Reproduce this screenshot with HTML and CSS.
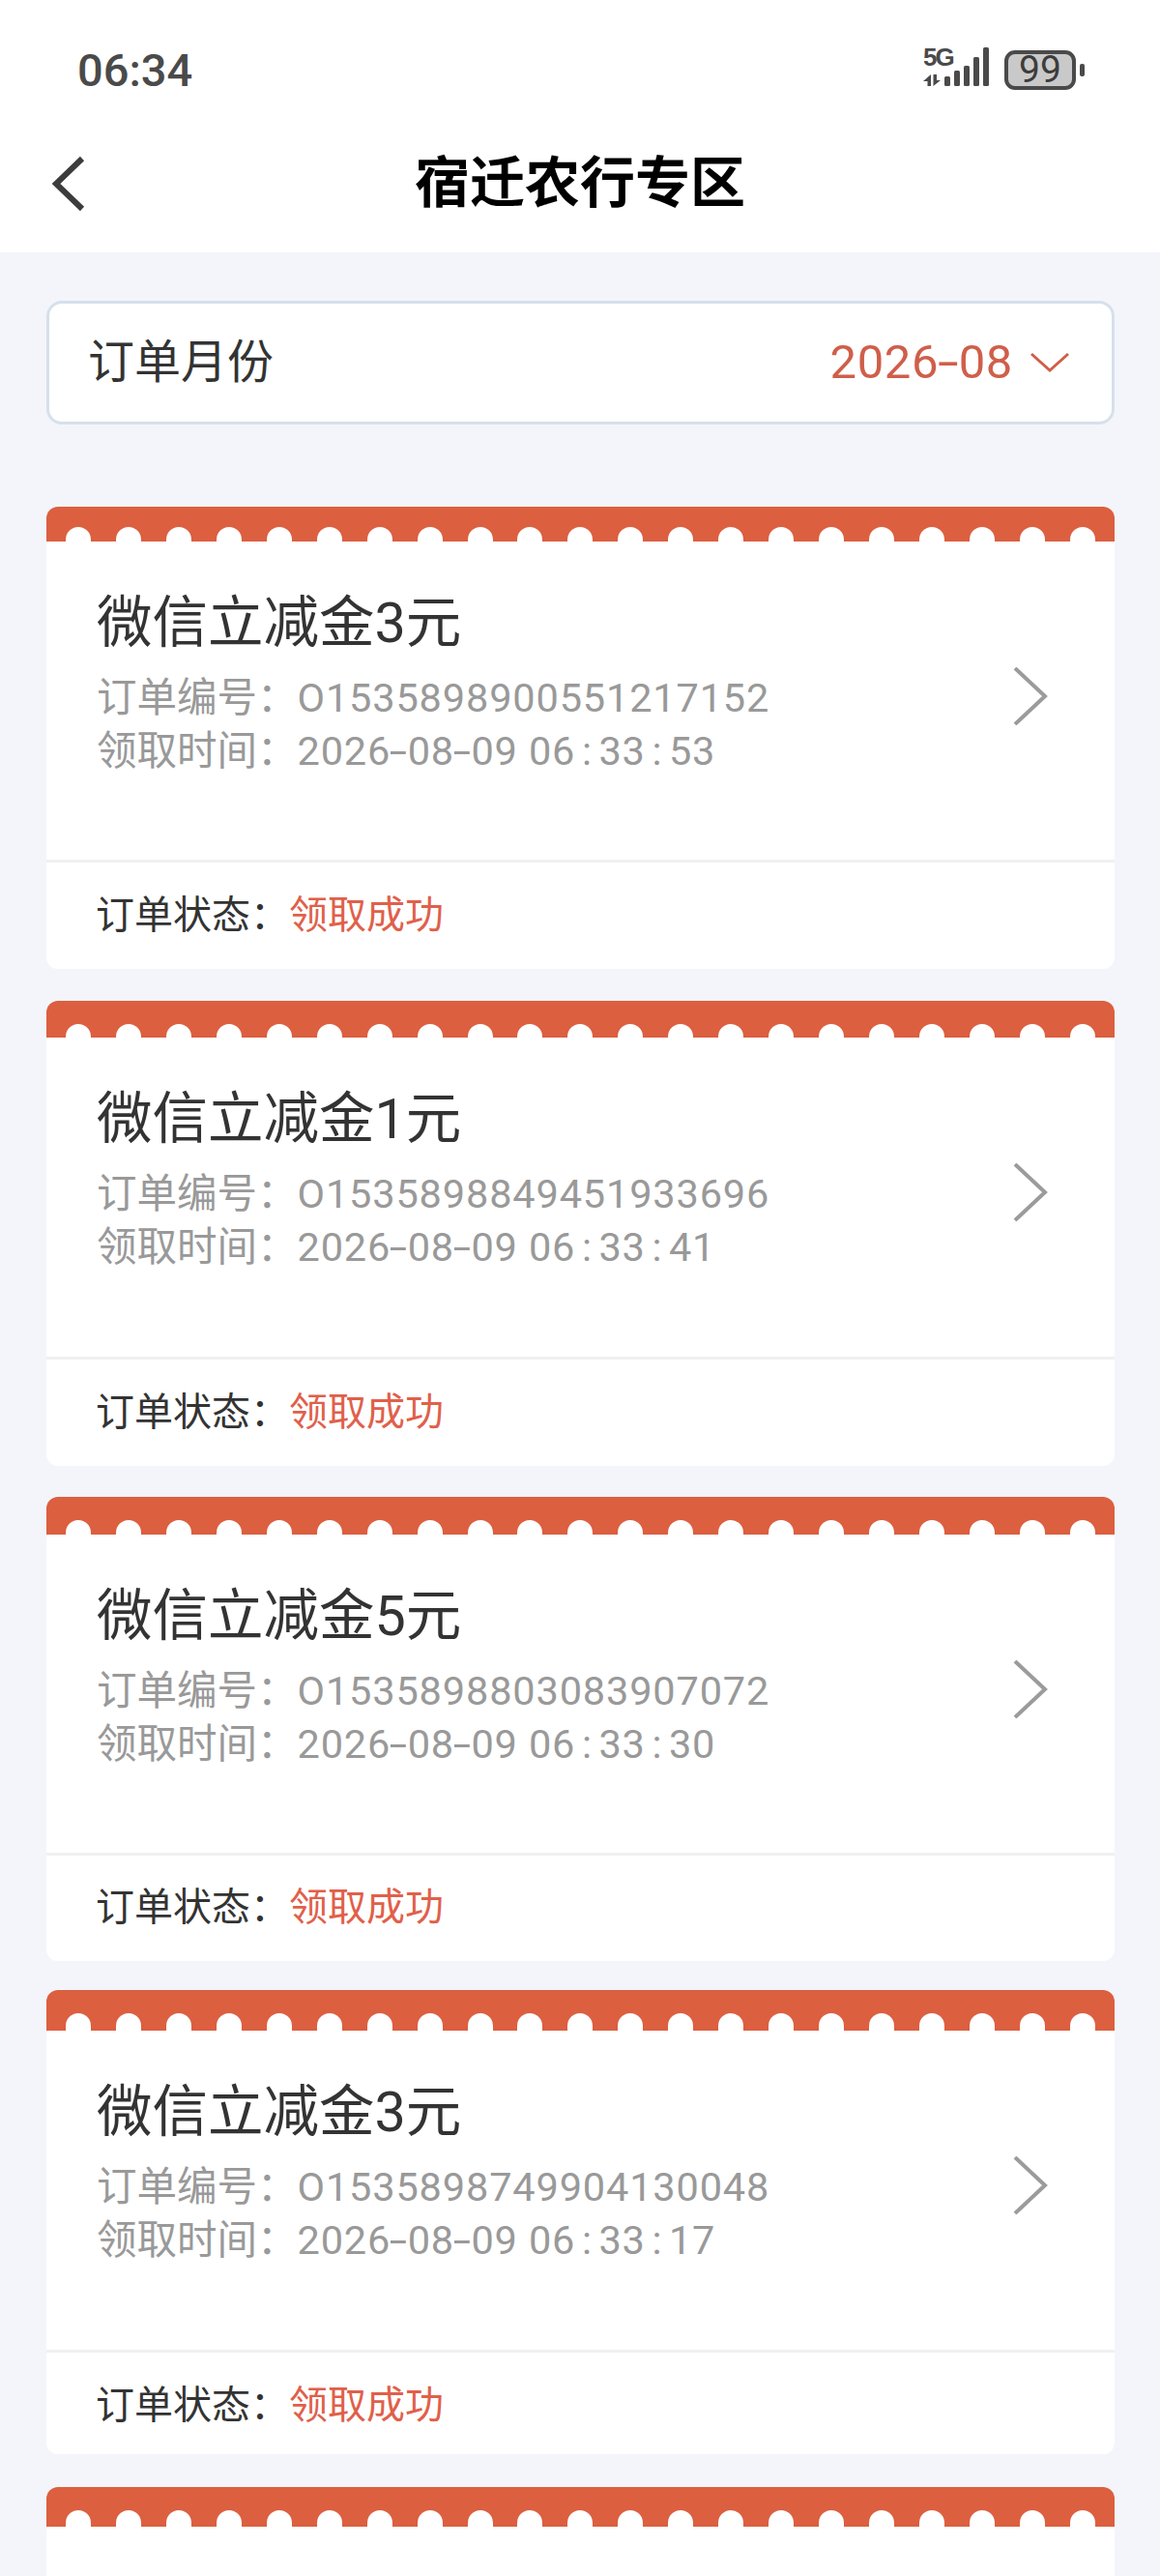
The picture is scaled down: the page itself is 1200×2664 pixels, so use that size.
FILE: index.html
```html
<!DOCTYPE html>
<html lang="zh-CN">
<head>
<meta charset="utf-8">
<title>宿迁农行专区</title>
<link rel="stylesheet" href="styles.css">
</head>
<body>
<div class="page">
  <header class="top">
    <div class="status">
      <span class="time">06:34</span>
      <div class="indicators">
        <svg class="net" width="72" height="52" viewBox="0 -8 72 52">
          <text x="0" y="19" class="net-label">5G</text>
          <path class="net-arrow" d="M8 28v12H4.500v-5H0zM10.500 28v12l7.500-6h-4v-6z"/>
          <rect x="22" y="30" width="6" height="10" rx="1.500"/>
          <rect x="32" y="24" width="6" height="16" rx="1.500"/>
          <rect x="42" y="19" width="6" height="21" rx="1.500"/>
          <rect x="52" y="10" width="6" height="30" rx="1.500"/>
          <rect x="62" y="0" width="6" height="40" rx="1.500"/>
        </svg>
        <div class="battery"><span>99</span></div>
        <i class="battery-nub"></i>
      </div>
    </div>
    <nav class="nav">
      <svg class="back" width="40" height="58" viewBox="0 0 40 58"><path d="M34 3 7 29l27 26"/></svg>
      <h1>宿迁农行专区</h1>
    </nav>
  </header>

  <main class="content">
    <div class="month">
      <span class="month-label">订单月份</span>
      <span class="month-value"><span class="month-text">2026<span class="hy">-</span>08</span>
        <svg width="40" height="22" viewBox="0 0 40 22"><path d="M1 2 20 19 39 2"/></svg>
      </span>
    </div>

    <article class="card card-a">
      <div class="band"><i></i><i></i><i></i><i></i><i></i><i></i><i></i><i></i><i></i><i></i><i></i><i></i><i></i><i></i><i></i><i></i><i></i><i></i><i></i><i></i><i></i></div>
      <div class="body">
        <div class="info">
          <h2>微信立减金3元</h2>
          <p>订单编号：<span class="num">O1535898900551217152</span></p>
          <p>领取时间：<span class="num">2026<span class="hy">-</span>08<span class="hy">-</span>09 06<span class="sep">:</span>33<span class="sep">:</span>53</span></p>
        </div>
        <svg class="go" width="36" height="60" viewBox="0 0 36 60"><path d="M2 1 33 30 2 59"/></svg>
      </div>
      <div class="foot">订单状态：<b>领取成功</b></div>
    </article>

    <article class="card card-b">
      <div class="band"><i></i><i></i><i></i><i></i><i></i><i></i><i></i><i></i><i></i><i></i><i></i><i></i><i></i><i></i><i></i><i></i><i></i><i></i><i></i><i></i><i></i></div>
      <div class="body">
        <div class="info">
          <h2>微信立减金1元</h2>
          <p>订单编号：<span class="num">O1535898849451933696</span></p>
          <p>领取时间：<span class="num">2026<span class="hy">-</span>08<span class="hy">-</span>09 06<span class="sep">:</span>33<span class="sep">:</span>41</span></p>
        </div>
        <svg class="go" width="36" height="60" viewBox="0 0 36 60"><path d="M2 1 33 30 2 59"/></svg>
      </div>
      <div class="foot">订单状态：<b>领取成功</b></div>
    </article>

    <article class="card card-c">
      <div class="band"><i></i><i></i><i></i><i></i><i></i><i></i><i></i><i></i><i></i><i></i><i></i><i></i><i></i><i></i><i></i><i></i><i></i><i></i><i></i><i></i><i></i></div>
      <div class="body">
        <div class="info">
          <h2>微信立减金5元</h2>
          <p>订单编号：<span class="num">O1535898803083907072</span></p>
          <p>领取时间：<span class="num">2026<span class="hy">-</span>08<span class="hy">-</span>09 06<span class="sep">:</span>33<span class="sep">:</span>30</span></p>
        </div>
        <svg class="go" width="36" height="60" viewBox="0 0 36 60"><path d="M2 1 33 30 2 59"/></svg>
      </div>
      <div class="foot">订单状态：<b>领取成功</b></div>
    </article>

    <article class="card card-d">
      <div class="band"><i></i><i></i><i></i><i></i><i></i><i></i><i></i><i></i><i></i><i></i><i></i><i></i><i></i><i></i><i></i><i></i><i></i><i></i><i></i><i></i><i></i></div>
      <div class="body">
        <div class="info">
          <h2>微信立减金3元</h2>
          <p>订单编号：<span class="num">O1535898749904130048</span></p>
          <p>领取时间：<span class="num">2026<span class="hy">-</span>08<span class="hy">-</span>09 06<span class="sep">:</span>33<span class="sep">:</span>17</span></p>
        </div>
        <svg class="go" width="36" height="60" viewBox="0 0 36 60"><path d="M2 1 33 30 2 59"/></svg>
      </div>
      <div class="foot">订单状态：<b>领取成功</b></div>
    </article>

    <article class="card card-e">
      <div class="band"><i></i><i></i><i></i><i></i><i></i><i></i><i></i><i></i><i></i><i></i><i></i><i></i><i></i><i></i><i></i><i></i><i></i><i></i><i></i><i></i><i></i></div>
    </article>
  </main>
</div>
</body>
</html>
```
FILE: styles.css
```css
* { box-sizing: border-box; }

html, body {
  margin: 0;
  padding: 0;
  background: #f4f5fa;
}

body {
  font-family: Roboto, "Noto Sans CJK SC", sans-serif;
  color: #333;
}

.page {
  width: 1200px;
  height: 2664px;
  overflow: hidden;
}

.top {
  background: #fff;
  height: 261px;
}

.status {
  height: 142px;
  padding: 2px 78px 0 80px;
  display: flex;
  align-items: center;
  justify-content: space-between;
}

.time {
  font-size: 47px;
  font-weight: 500;
  color: #4a4a4a;
  line-height: 1;
}

.indicators {
  display: flex;
  align-items: center;
}

.net {
  fill: #4a4a4a;
  margin-right: 12px;
  margin-top: -10px;
}

.net-label {
  font-family: "Liberation Sans", sans-serif;
  font-size: 26px;
  font-weight: 700;
  letter-spacing: -2px;
}

.battery {
  width: 74px;
  height: 41px;
  border: 4px solid #4a4a4a;
  border-radius: 11px;
  background: #c9c9c9;
  display: flex;
  align-items: center;
  justify-content: center;
}

.battery span {
  font-size: 39px;
  line-height: 1;
  color: #3c3c3c;
}

.battery-nub {
  width: 5px;
  height: 13px;
  margin-left: 4px;
  border-radius: 2px;
  background: #4a4a4a;
}

.nav {
  height: 117px;
  position: relative;
  display: flex;
  align-items: center;
  justify-content: center;
}

.nav h1 {
  margin: 0 0 22px;
  font-size: 57px;
  font-weight: 700;
  color: #000;
  line-height: 60px;
}

.back {
  position: absolute;
  left: 51px;
  top: 19px;
  fill: none;
  stroke: #3c3c3c;
  stroke-width: 6;
}

.content {
  padding: 50px 47px 0 48px;
}

.month {
  height: 128px;
  margin-bottom: 84.5px;
  padding: 0 44px 0 40px;
  background: #fff;
  border: 3px solid #d6e0ec;
  border-radius: 16px;
  display: flex;
  align-items: center;
  justify-content: space-between;
}

.month-label {
  font-size: 48px;
  line-height: 60px;
  color: #333;
}

.month-value {
  display: flex;
  align-items: center;
  gap: 18px;
  font-size: 49px;
  line-height: 60px;
  color: #cf5f4a;
}

.month-text { letter-spacing: .6px; }

.month-value svg {
  fill: none;
  stroke: #cf5f4a;
  stroke-width: 3;
}

.hy {
  display: inline-block;
  width: .42em;
  text-align: center;
  transform: scaleX(1.6);
}

.sep {
  margin: 0 .16em;
}

.card {
  background: #fff;
  border-radius: 12px;
  overflow: hidden;
}

.card-a { margin-bottom: 32.5px; }
.card-b { margin-bottom: 32px; }
.card-c { margin-bottom: 30px; }
.card-d { margin-bottom: 34px; }
.card-e { min-height: 120px; }

.band {
  background: #dc5f40;
  padding: 0 20px;
  display: flex;
  align-items: flex-end;
  justify-content: space-between;
}

.band i {
  width: 26px;
  background: #fff;
  border-radius: 13px 13px 0 0;
}

.card-a .band { height: 36.5px; }
.card-b .band { height: 38.5px; }
.card-c .band { height: 39px; }
.card-d .band { height: 42px; }
.card-e .band { height: 41px; }

.card-a .band i { height: 15px; }
.card-b .band i { height: 14px; }
.card-c .band i { height: 15px; }
.card-d .band i { height: 18px; }
.card-e .band i { height: 17px; }

.body {
  height: 329px;
  padding: 50px 69px 0 52px;
  display: flex;
  justify-content: space-between;
  align-items: flex-start;
}

.card-b .body,
.card-d .body { height: 330px; }

.info h2 {
  margin: 0 0 14px;
  font-size: 57.5px;
  font-weight: 400;
  line-height: 70px;
  color: #333;
}

.info p {
  margin: 0;
  font-size: 41.5px;
  line-height: 55px;
  color: #999;
}

.num { letter-spacing: .85px; }

.go {
  margin-top: 80px;
  fill: none;
  stroke: #9b9b9b;
  stroke-width: 4;
}

.foot {
  height: 113px;
  padding: 0 0 9px 51px;
  border-top: 3px solid #f0f0f3;
  display: flex;
  align-items: center;
  font-size: 40px;
  color: #333;
}

.card-c .foot { height: 112px; }
.card-d .foot { height: 108px; padding-bottom: 4px; }

.foot b {
  font-weight: 400;
  color: #e0604a;
}
```
